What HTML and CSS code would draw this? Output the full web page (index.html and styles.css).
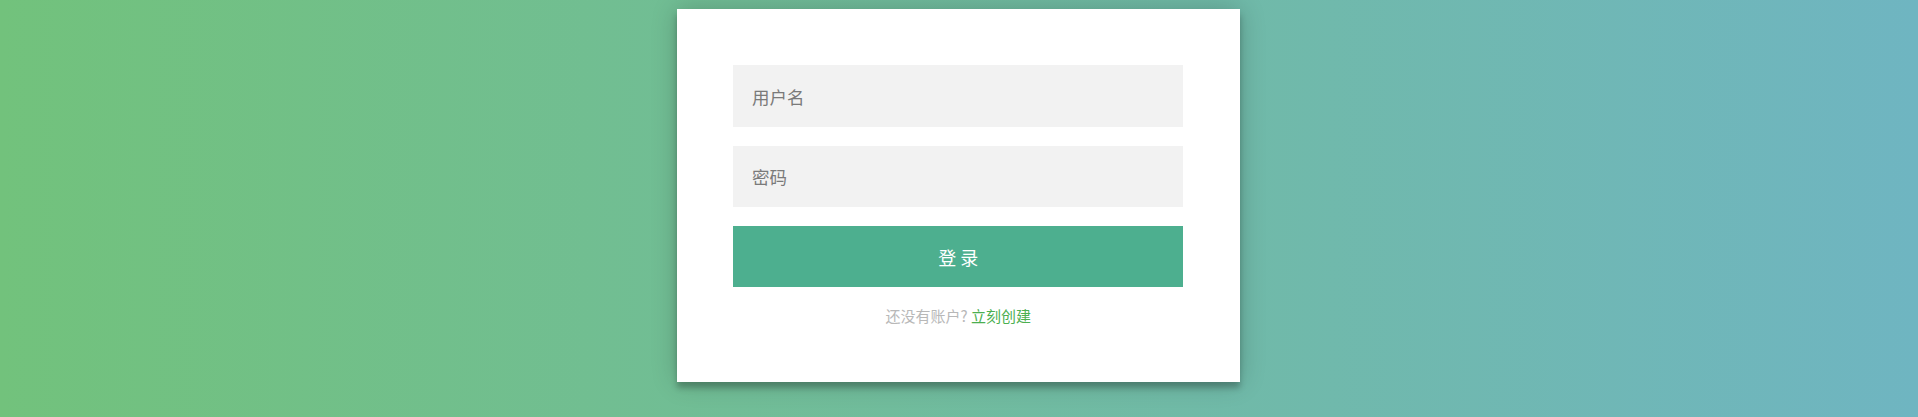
FILE: index.html
```html
<!DOCTYPE html>
<html lang="zh-CN">
<head>
<meta charset="utf-8">
<title>登录</title>
<link rel="stylesheet" href="styles.css">
</head>
<body>
<div class="page">
  <form class="form">
    <input class="field" type="text" placeholder="用户名">
    <input class="field" type="password" placeholder="密码">
    <button class="btn" type="button">登 录</button>
    <p class="message">还没有账户? <a class="link" href="#">立刻创建</a></p>
  </form>
</div>
</body>
</html>
```
FILE: styles.css
```css
html, body {
  margin: 0;
  padding: 0;
  height: 100%;
}
body {
  background: linear-gradient(to right, #72c27c, #6fb5c1);
  font-family: "Microsoft YaHei", "Noto Sans CJK SC", "Noto Sans", sans-serif;
}
.page {
  display: flex;
  justify-content: center;
  padding-top: 9px;
}
.form {
  width: 450px;
  padding: 56.25px;
  margin-right: 1.5px;
  background: #ffffff;
  box-shadow: 0 0 25px 0 rgba(0, 0, 0, 0.2), 0 6px 6px 0 rgba(0, 0, 0, 0.24);
  display: flex;
  flex-direction: column;
  text-align: center;
}
.field {
  box-sizing: border-box;
  width: 100%;
  height: 61.5px;
  margin: 0 0 18.75px;
  padding: 0 18.75px;
  border: 0;
  outline: 0;
  background: #f2f2f2;
  font-family: inherit;
  font-size: 17.5px;
  color: #333;
}
.field::placeholder {
  color: #7a7a7a;
}
.btn {
  box-sizing: border-box;
  width: 100%;
  height: 61.5px;
  border: 0;
  outline: 0;
  padding: 0;
  background: #4daf8f;
  color: #ffffff;
  font-family: inherit;
  font-size: 18px;
  cursor: pointer;
}
.message {
  margin: 18.75px 0 0;
  color: #b8b8b8;
  font-size: 15px;
  line-height: 20px;
}
.link {
  color: #4caf50;
  text-decoration: none;
}
```
